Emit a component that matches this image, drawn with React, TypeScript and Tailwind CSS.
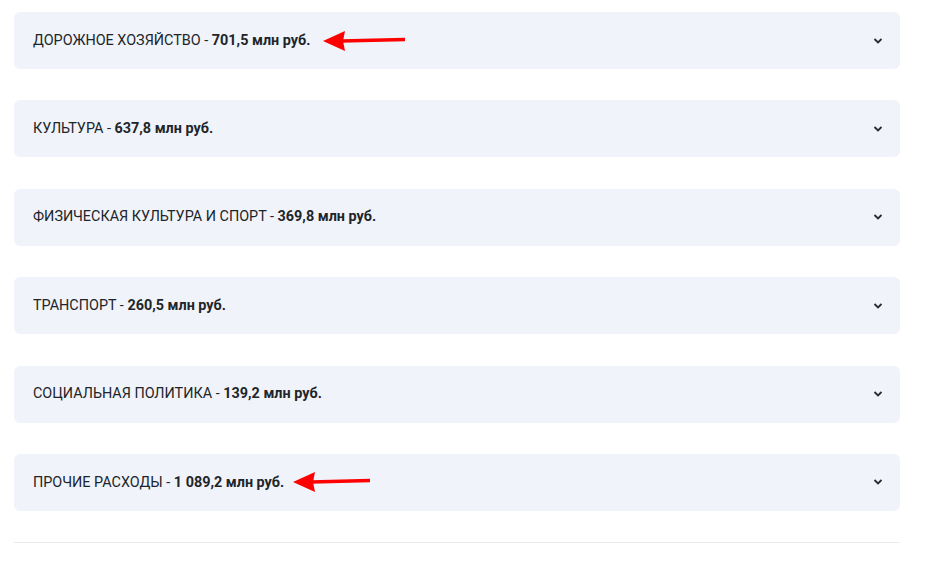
const items = [
  { title: "ДОРОЖНОЕ ХОЗЯЙСТВО", amount: "701,5 млн руб.", arrow: "first" },
  { title: "КУЛЬТУРА", amount: "637,8 млн руб.", arrow: "" },
  { title: "ФИЗИЧЕСКАЯ КУЛЬТУРА И СПОРТ", amount: "369,8 млн руб.", arrow: "" },
  { title: "ТРАНСПОРТ", amount: "260,5 млн руб.", arrow: "" },
  { title: "СОЦИАЛЬНАЯ ПОЛИТИКА", amount: "139,2 млн руб.", arrow: "" },
  { title: "ПРОЧИЕ РАСХОДЫ", amount: "1 089,2 млн руб.", arrow: "last" },
];

const RedArrow = ({ length, className }: { length: number; className: string }) => (
  <svg width={length} height="22" viewBox={`0 0 ${length} 22`} className={className}>
    <polygon points="0,11 22,1 20,11 22,21" fill="#ff0000" />
    <line x1="18" y1="11" x2={length - 1} y2="9.5" stroke="#ff0000" strokeWidth="3.5" />
  </svg>
);

const Chevron = () => (
  <svg width="10" height="8" viewBox="0 0 10 8" className="shrink-0">
    <path d="M1.5 2 L5 5.5 L8.5 2" fill="none" stroke="#2b2b2b" strokeWidth="1.8" />
  </svg>
);

const App = () => {
  return (
    <div className="min-h-[565px] w-[914px] bg-white px-[14px] pt-[12px] font-['Roboto',sans-serif]">
      <div className="flex flex-col gap-[31.4px]">
        {items.map((item) => (
          <div
            key={item.title}
            className="flex h-[57px] items-center justify-between rounded-md bg-[#f0f3fa] pl-[19px] pr-[17px]"
          >
            <div className="flex items-center text-[14.4px] text-[#212529]">
              <span>
                {item.title} - <b className="font-bold">{item.amount}</b>
              </span>
              {item.arrow === "first" && <RedArrow length={83} className="ml-[13px] shrink-0" />}
              {item.arrow === "last" && <RedArrow length={78} className="ml-[9px] shrink-0" />}
            </div>
            <Chevron />
          </div>
        ))}
      </div>
      <div className="mt-[31px] border-t border-[#e9ecef]" />
    </div>
  );
};

export default App;
